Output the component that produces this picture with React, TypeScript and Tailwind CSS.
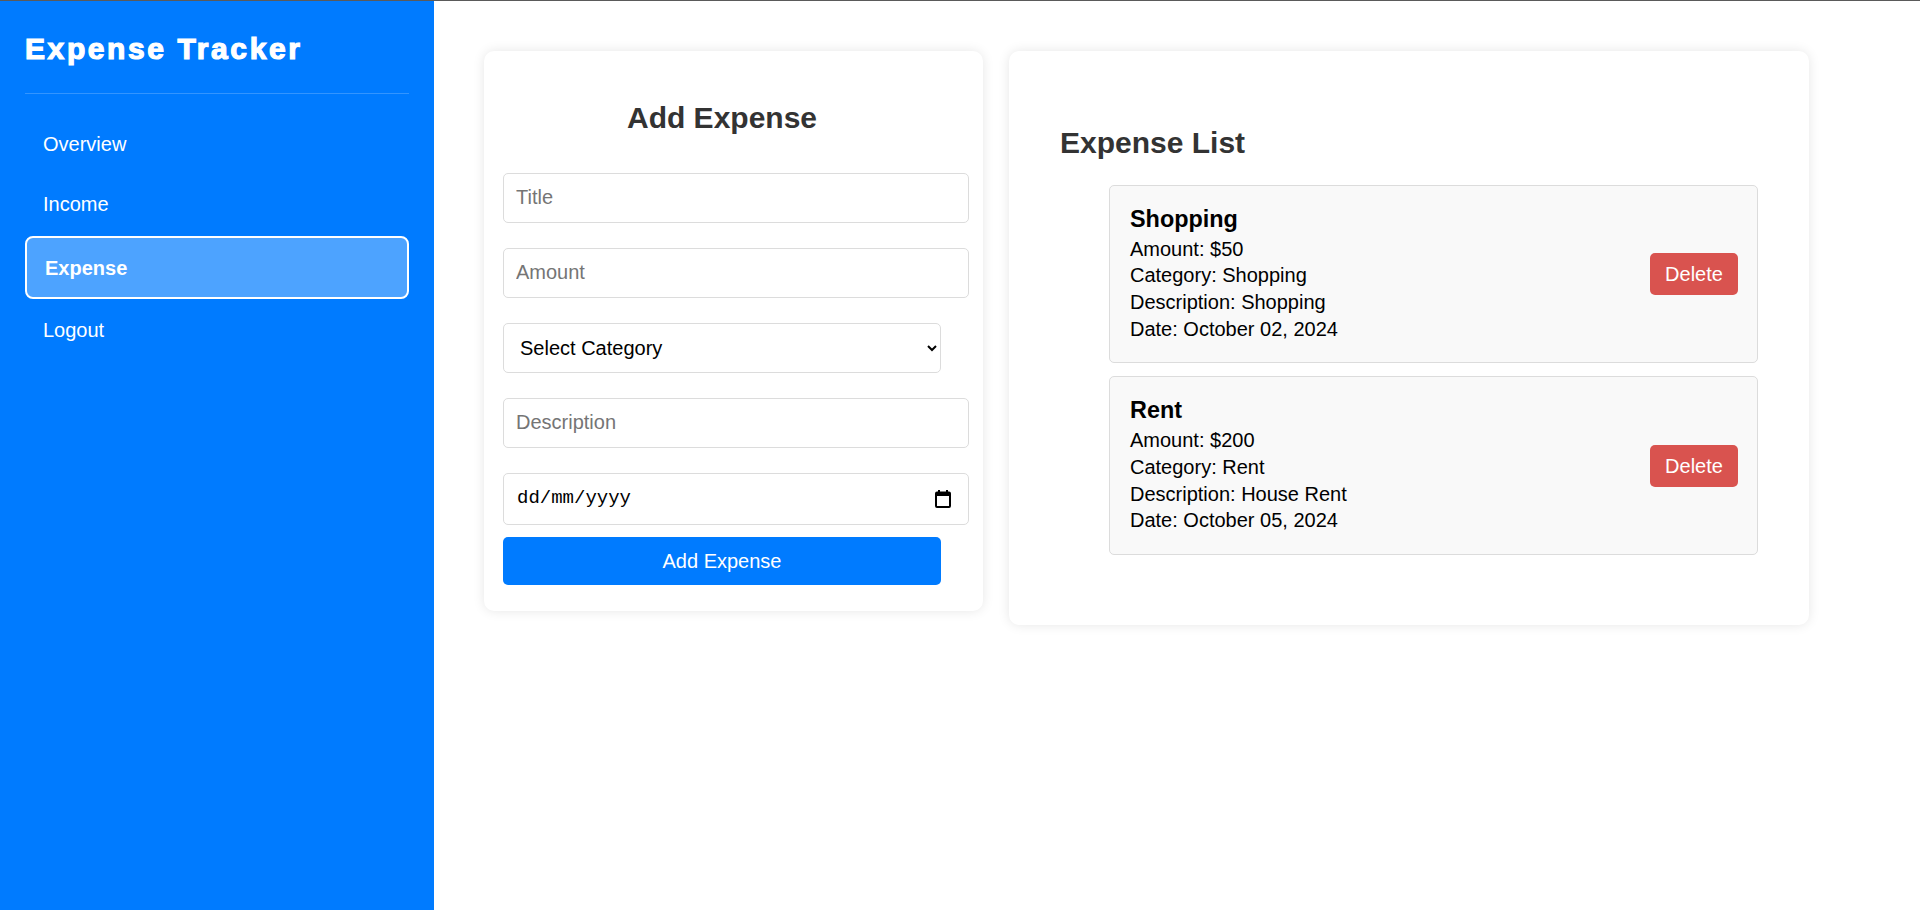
import React from "react";

type Expense = {
  title: string;
  amount: number;
  category: string;
  description: string;
  date: string;
};

const expenses: Expense[] = [
  { title: "Shopping", amount: 50, category: "Shopping", description: "Shopping", date: "October 02, 2024" },
  { title: "Rent", amount: 200, category: "Rent", description: "House Rent", date: "October 05, 2024" },
];

const navItems = ["Overview", "Income", "Expense", "Logout"];

const Sidebar: React.FC = () => {
  return (
    <aside className="w-[434px] shrink-0 bg-[#007bff] px-[25px] pt-[31px] text-white">
      {/* heavy title, close to Arial Black */}
      <h2 className="text-[30px] font-bold leading-[34px] tracking-[2.6px] [-webkit-text-stroke:1.2px_white]">
        Expense Tracker
      </h2>
      <div className="mt-[27px] h-px bg-white/20" />
      <nav className="mt-[22px] flex flex-col gap-[5px]">
        {navItems.map((item) =>
          item === "Expense" ? (
            <div
              key={item}
              className="flex h-[63px] items-center rounded-[8px] border-2 border-white bg-white/30 pl-[18px] text-[20px] font-bold"
            >
              {item}
            </div>
          ) : (
            <div
              key={item}
              className={`flex h-[55px] items-center border-2 border-transparent pl-[16px] text-[20px] ${
                item === "Logout" ? "-mt-[2px]" : ""
              }`}
            >
              {item}
            </div>
          )
        )}
      </nav>
    </aside>
  );
};

const CalendarIcon: React.FC = () => (
  <svg width="16" height="18" viewBox="0 0 16 18" fill="none">
    <rect x="3" y="0" width="2" height="3" fill="#000" />
    <rect x="11" y="0" width="2" height="3" fill="#000" />
    <rect x="1" y="2.5" width="14" height="14.5" rx="1" stroke="#000" strokeWidth="2" />
    <rect x="1" y="2.5" width="14" height="3.5" fill="#000" />
  </svg>
);

const inputClass =
  "h-[50px] w-[466px] rounded-[5px] border border-[#dcdcdc] bg-white px-3 text-[20px] text-black outline-none placeholder:text-[#757575]";

const AddExpenseForm: React.FC = () => {
  return (
    <div className="w-[499px] shrink-0 rounded-[10px] bg-white pb-[26px] pl-[19px] pt-[50px] shadow-[0_0_12px_rgba(0,0,0,0.1)]">
      <h2 className="w-[438px] text-center text-[30px] font-bold leading-[33.5px] text-[#333]">Add Expense</h2>
      <form className="mt-[38px] flex flex-col" onSubmit={(e) => e.preventDefault()}>
        <input className={inputClass} placeholder="Title" />
        <input className={`${inputClass} mt-[25px]`} placeholder="Amount" />
        <select
          defaultValue=""
          className="mt-[25px] h-[50px] w-[438px] rounded-[5px] border border-[#dcdcdc] bg-white px-3 text-[20px] text-black"
        >
          <option value="">Select Category</option>
          <option value="Shopping">Shopping</option>
          <option value="Rent">Rent</option>
        </select>
        <input className={`${inputClass} mt-[25px]`} placeholder="Description" />
        <div className="mt-[25px] flex h-[52px] w-[466px] items-center justify-between rounded-[5px] border border-[#dcdcdc] bg-white pl-[13px] pr-[17px]">
          <span className="font-['Liberation_Mono',monospace] text-[19px] text-black">dd/mm/yyyy</span>
          <CalendarIcon />
        </div>
        <button type="submit" className="mt-[12px] h-[48px] w-[438px] rounded-[5px] bg-[#007bff] text-[20px] text-white">
          Add Expense
        </button>
      </form>
    </div>
  );
};

const ExpenseItem: React.FC<{ expense: Expense }> = ({ expense }) => (
  <div className="flex items-center justify-between rounded-[5px] border border-[#dcdcdc] bg-[#f9f9f9] py-5 pl-5 pr-[19px]">
    <div className="text-black">
      <h3 className="text-[23.4px] font-bold leading-[26px]">{expense.title}</h3>
      <div className="mt-[4px] text-[20px] leading-[26.7px]">
        <p>Amount: ${expense.amount}</p>
        <p>Category: {expense.category}</p>
        <p>Description: {expense.description}</p>
        <p>Date: {expense.date}</p>
      </div>
    </div>
    <button className="h-[42px] w-[88px] rounded-[5px] bg-[#d9534f] text-[20px] text-white">Delete</button>
  </div>
);

const ExpenseList: React.FC = () => (
  <div className="w-[800px] shrink-0 rounded-[10px] bg-white px-[51px] pb-[70px] pt-[75px] shadow-[0_0_12px_rgba(0,0,0,0.1)]">
    <h2 className="text-[30px] font-bold leading-[33.5px] text-[#333]">Expense List</h2>
    <div className="mt-[25px] flex flex-col gap-[13px] pl-[49px]">
      {expenses.map((e) => (
        <ExpenseItem key={e.title} expense={e} />
      ))}
    </div>
  </div>
);

export default function App() {
  return (
    <div className="flex min-h-[910px] border-t border-[#5a5a5a] bg-white font-['Liberation_Sans',Arial,sans-serif]">
      <Sidebar />
      <main className="flex flex-1 items-start gap-[26px] pl-[50px] pt-[50px]">
        <AddExpenseForm />
        <ExpenseList />
      </main>
    </div>
  );
}
